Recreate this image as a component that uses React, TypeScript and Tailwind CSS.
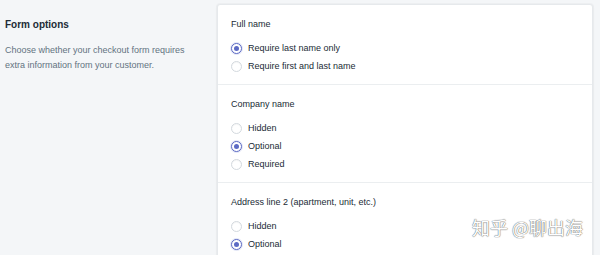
import { useState } from "react";

type Section = {
  title: string;
  options: string[];
  selected: number;
};

const sections: Section[] = [
  { title: "Full name", options: ["Require last name only", "Require first and last name"], selected: 0 },
  { title: "Company name", options: ["Hidden", "Optional", "Required"], selected: 1 },
  { title: "Address line 2 (apartment, unit, etc.)", options: ["Hidden", "Optional", "Required"], selected: 1 },
];

function Radio({ checked }: { checked: boolean }) {
  return (
    <span
      className={
        checked
          ? "flex h-[11px] w-[11px] shrink-0 items-center justify-center rounded-full border border-[#5c6ac4] bg-white shadow-[0_0_0_1px_#e3e6f6]"
          : "flex h-[11px] w-[11px] shrink-0 items-center justify-center rounded-full border border-[#d3d9de] bg-white shadow-[inset_0_1px_1px_rgba(0,0,0,0.04)]"
      }
    >
      {checked && <span className="h-[5px] w-[5px] rounded-full bg-[#5c6ac4]" />}
    </span>
  );
}

function OptionGroup({ section }: { section: Section }) {
  const [value, setValue] = useState(section.selected);
  return (
    <div className="border-b border-[#ebeef0] px-[13px] pt-[13px] pb-[9px] last:border-b-0">
      <div className="text-[9px] leading-[12px] text-[#212b36]">{section.title}</div>
      <div className="mt-[9px] flex flex-col">
        {section.options.map((opt, i) => (
          <label
            key={opt}
            className="flex h-[18px] cursor-pointer items-center gap-[6px] text-[9px] leading-[12px] text-[#212b36]"
            onClick={() => setValue(i)}
          >
            <Radio checked={value === i} />
            <span>{opt}</span>
          </label>
        ))}
      </div>
    </div>
  );
}

export default function App() {
  return (
    <div className="relative h-[255px] w-[600px] overflow-hidden bg-[#f4f6f8] font-['Liberation_Sans',Arial,sans-serif]">
      <div className="flex">
        <div className="w-[217px] shrink-0 pl-[5px] pt-[18px] pr-[12px]">
          <h2 className="text-[10px] font-bold leading-[14px] text-[#212b36]">Form options</h2>
          <p className="mt-[11px] text-[9px] leading-[15px] text-[#637381]">
            Choose whether your checkout form requires extra information from your customer.
          </p>
        </div>
        <div className="mt-[4px] mr-[7px] flex-1 rounded-[3px] border border-[#e6e9ec] bg-white shadow-[0_0_0_1px_rgba(63,63,68,0.03),0_1px_2px_rgba(63,63,68,0.08)]">
          {sections.map((s) => (
            <OptionGroup key={s.title} section={s} />
          ))}
        </div>
      </div>
      <div className="pointer-events-none absolute left-[472px] top-[215px] font-['Noto_Sans_CJK_SC',sans-serif] text-[18px] leading-[24px] text-white [text-shadow:0_0_1px_#666,0_0_1px_#666]">
        知乎 @聊出海
      </div>
    </div>
  );
}
